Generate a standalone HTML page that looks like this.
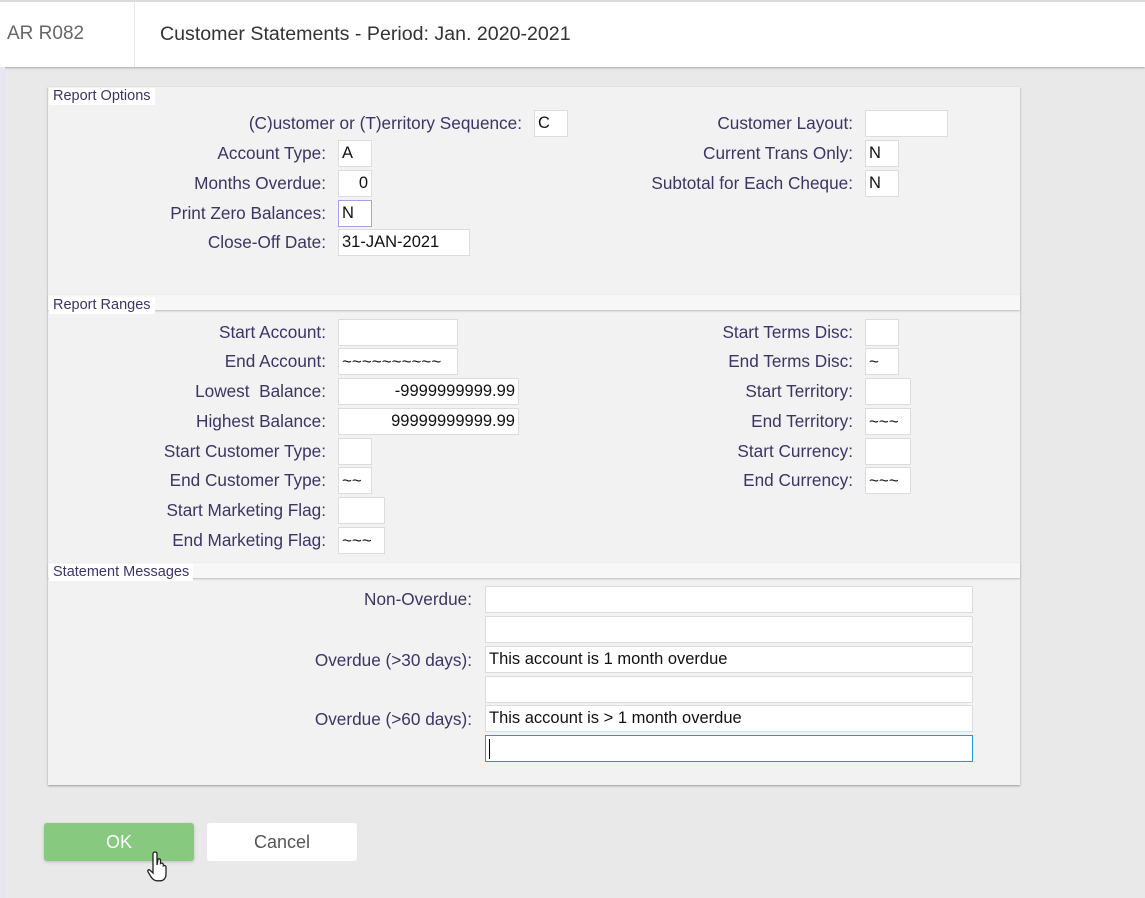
<!DOCTYPE html>
<html><head><meta charset="utf-8"><style>
*{box-sizing:border-box}
body{margin:0;width:1145px;height:898px;background:#e9e9e9;font-family:"Liberation Sans",sans-serif;position:relative;overflow:hidden}
.hdr{position:absolute;left:0;top:0;width:1145px;height:67px;background:#fff;border-top:2px solid #dcdcdc;box-shadow:0 1px 2px #aaa}
.hdr .a{position:absolute;left:7px;top:21px;font-size:19px;color:#666}
.hdr .sep{position:absolute;left:134px;top:0;width:1px;height:65px;background:#e6e6e6}
.hdr .t{position:absolute;left:160px;top:21px;font-size:19.6px;color:#333}
.strip{position:absolute;left:0;top:67px;width:5px;height:831px;background:#e6e6ee}
.panel{position:absolute;left:48px;top:87px;width:972px;height:698px;background:#f2f2f2;box-shadow:0 1px 2px #999}
.bar{position:absolute;left:48px;width:972px;height:15px;background:#f7f7f7;box-shadow:0 1px 2px #bbb}
.sec{position:absolute;left:49px;background:#fff;color:#3b3566;font-size:14.5px;padding:0 4px;height:17px;line-height:17px}
.l{position:absolute;font-size:17.2px;color:#3b3566;text-align:right;white-space:nowrap}
.i{position:absolute;height:27px;background:#fff;border:1px solid #dcdcdc;font-size:16.5px;color:#111;padding:3px 3px;white-space:nowrap;overflow:hidden;line-height:19px}
.tl{font-size:17px}
.btn{position:absolute;top:823px;width:150px;height:38px;border-radius:3px;font-size:18px;text-align:center;line-height:38px}
</style></head><body>
<div class="hdr"><span class="a">AR R082</span><div class="sep"></div><span class="t">Customer Statements - Period: Jan. 2020-2021</span></div>
<div class="strip"></div>
<div class="panel"></div>
<div class="sec" style="top:88px">Report Options</div>

<div class="l" style="right:623px;top:113px">(C)ustomer or (T)erritory Sequence:</div><div class="i" style="left:534px;top:110px;width:34px">C</div>
<div class="l" style="right:819px;top:143px">Account Type:</div><div class="i" style="left:338px;top:140px;width:34px">A</div>
<div class="l" style="right:819px;top:173px">Months Overdue:</div><div class="i" style="left:338px;top:170px;width:34px;text-align:right">0</div>
<div class="l" style="right:819px;top:203px">Print Zero Balances:</div><div class="i" style="left:338px;top:200px;width:34px;border-color:#a99fe6">N</div>
<div class="l" style="right:819px;top:232px">Close-Off Date:</div><div class="i" style="left:338px;top:229px;width:132px">31-JAN-2021</div>
<div class="l" style="right:292px;top:113px">Customer Layout:</div><div class="i" style="left:865px;top:110px;width:83px"></div>
<div class="l" style="right:292px;top:143px">Current Trans Only:</div><div class="i" style="left:865px;top:140px;width:34px">N</div>
<div class="l" style="right:292px;top:173px">Subtotal for Each Cheque:</div><div class="i" style="left:865px;top:170px;width:34px">N</div>

<div class="bar" style="top:295px"></div>
<div class="sec" style="top:297px">Report Ranges</div>
<div class="l" style="right:819px;top:322px">Start Account:</div><div class="i" style="left:338px;top:319px;width:120px"></div>
<div class="l" style="right:819px;top:351px">End Account:</div><div class="i tl" style="left:338px;top:348px;width:120px">~~~~~~~~~~</div>
<div class="l" style="right:819px;top:381px">Lowest &nbsp;Balance:</div><div class="i" style="left:338px;top:378px;width:181px;text-align:right">-9999999999.99</div>
<div class="l" style="right:819px;top:411px">Highest Balance:</div><div class="i" style="left:338px;top:408px;width:181px;text-align:right">99999999999.99</div>
<div class="l" style="right:819px;top:441px">Start Customer Type:</div><div class="i" style="left:338px;top:438px;width:34px"></div>
<div class="l" style="right:819px;top:470px">End Customer Type:</div><div class="i tl" style="left:338px;top:467px;width:34px">~~</div>
<div class="l" style="right:819px;top:500px">Start Marketing Flag:</div><div class="i" style="left:338px;top:497px;width:47px"></div>
<div class="l" style="right:819px;top:530px">End Marketing Flag:</div><div class="i tl" style="left:338px;top:527px;width:47px">~~~</div>
<div class="l" style="right:292px;top:322px">Start Terms Disc:</div><div class="i" style="left:865px;top:319px;width:34px"></div>
<div class="l" style="right:292px;top:351px">End Terms Disc:</div><div class="i tl" style="left:865px;top:348px;width:34px">~</div>
<div class="l" style="right:292px;top:381px">Start Territory:</div><div class="i" style="left:865px;top:378px;width:46px"></div>
<div class="l" style="right:292px;top:411px">End Territory:</div><div class="i tl" style="left:865px;top:408px;width:46px">~~~</div>
<div class="l" style="right:292px;top:441px">Start Currency:</div><div class="i" style="left:865px;top:438px;width:46px"></div>
<div class="l" style="right:292px;top:470px">End Currency:</div><div class="i tl" style="left:865px;top:467px;width:46px">~~~</div>

<div class="bar" style="top:563px"></div>
<div class="sec" style="top:564px">Statement Messages</div>
<div class="l" style="right:673px;top:589px">Non-Overdue:</div><div class="i" style="left:485px;top:586px;width:488px"></div>
<div class="i" style="left:485px;top:616px;width:488px"></div>
<div class="l" style="right:673px;top:650px">Overdue (&gt;30 days):</div><div class="i" style="left:485px;top:646px;width:488px">This account is 1 month overdue</div>
<div class="i" style="left:485px;top:676px;width:488px"></div>
<div class="l" style="right:673px;top:709px">Overdue (&gt;60 days):</div><div class="i" style="left:485px;top:705px;width:488px">This account is &gt; 1 month overdue</div>
<div class="i" style="left:485px;top:735px;width:488px;border-color:#1a9ad6"><span style="display:inline-block;width:1px;height:20px;background:#000;vertical-align:middle"></span></div>

<div class="btn" style="left:44px;background:#86c97f;color:#fff;box-shadow:0 1px 3px #bbb">OK</div>
<div class="btn" style="left:207px;background:#fff;color:#555">Cancel</div>
<svg style="position:absolute;left:146px;top:850px" width="28" height="36" viewBox="0 0 28 36"><path d="M9 2c1.5 0 2 1 2 2v11l1-6c1.5-.5 2.5 0 2.5 1.5v3c1-.8 2.5-.5 2.8.8v1.5c1-.6 2.5-.3 2.7 1v7c0 4-2 7-6 7h-3c-3 0-4.5-2-6-4l-3-5c-.8-1.4.5-2.6 1.8-1.8L7 23V4c0-1 .5-2 2-2z" fill="#fff" stroke="#222" stroke-width="1.3"/></svg>
</body></html>
